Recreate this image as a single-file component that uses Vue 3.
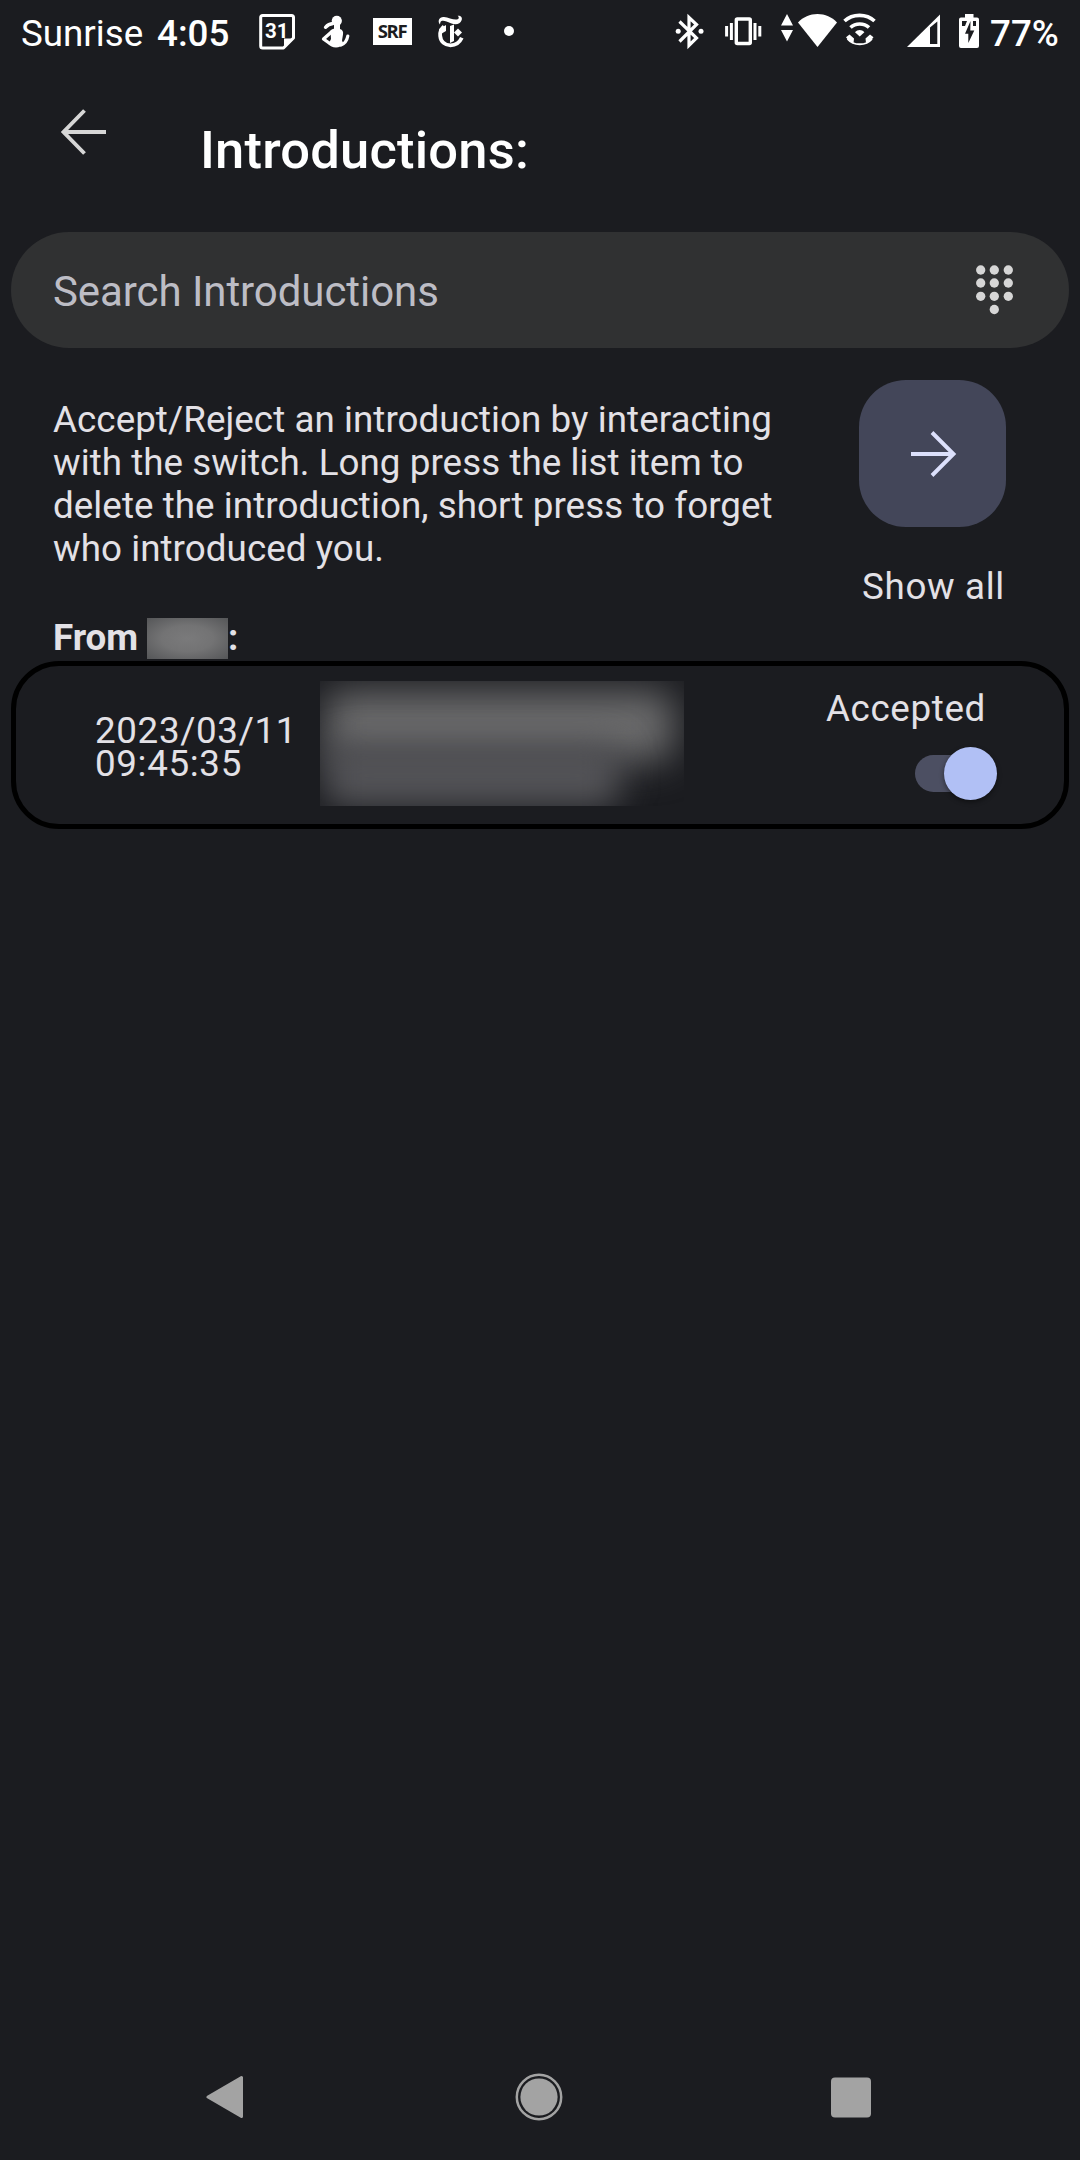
<script setup>
import { ref } from 'vue'

const accepted = ref(true)
const dialDots = [
  [4.7, 5], [18.3, 5], [32.3, 5],
  [4.7, 18], [18.3, 18], [32.3, 18],
  [4.7, 31.3], [18.3, 31.3], [32.3, 31.3],
  [18.3, 44.5],
]
</script>

<template>
  <div class="screen">
    <header class="status">
      <div class="side">
        <span class="label">Sunrise</span>
        <span class="label clock">4:05</span>
        <svg class="calendar" width="40" height="62" viewBox="257 0 40 62">
          <path d="M262.700 15.500h28.800a2 2 0 0 1 2 2v20.500l-10 10h-20.800a2 2 0 0 1-2-2v-28.500a2 2 0 0 1 2-2z" fill="none" stroke="#fff" stroke-width="3" stroke-linejoin="round" />
          <path d="M284 47v-8.500h9z" fill="#fff" />
          <text x="276.700" y="38.300" text-anchor="middle" class="day">31</text>
        </svg>
        <svg class="runner" width="30" height="62" viewBox="320 0 30 62">
          <circle cx="336.800" cy="20.800" r="5.100" fill="#fff" />
          <path d="M333 23.500c-3.500.3-5.500 1.500-7.500 3.800" fill="none" stroke="#fff" stroke-width="3.300" stroke-linecap="round" />
          <path d="M334 24h6v5c2.500.8 3.500 2.500 3 5.500l-1 6 1.500 3.500c-1.500 2.200-4.500 3.500-7.500 3.500-3.500 0-6-1.500-7.500-3.500l2.500-5-.5-8c.5-1.500 1.800-2 3.500-2.300z" fill="#fff" />
          <path d="M332 31.500l-8.500 7.500 7 5" fill="none" stroke="#fff" stroke-width="3.300" stroke-linejoin="round" />
          <path d="M341 45c4-1.500 6-4.500 6.800-9" fill="none" stroke="#fff" stroke-width="3.200" stroke-linecap="round" />
        </svg>
        <svg class="srf" width="39" height="62" viewBox="373 0 39 62">
          <path d="M373 18h39v27h-39z" fill="#fff" />
          <text x="392.700" y="38" text-anchor="middle" textLength="30" class="srf-text">SRF</text>
        </svg>
        <svg class="times" width="30" height="62" viewBox="436 0 30 62">
          <path d="M440 24.500c-3-3.500-.5-8 4-7.500 4.500.5 9.500 3.200 13 2.500 2-.4 2.500-2.300.6-3.800 3.500-.2 5 2 4 4.600-1.500 4.200-6 4.700-10.800 3-4-1.500-7-3.200-9.300-2.200-1.300.6-1.200 2-1.500 3.400z" fill="#fff" />
          <path d="M444 26.500c-3 2.500-4.200 6-3.800 9.500.6 6 5 9.300 10.300 9.300 5 0 9-2.500 11.300-7.500" fill="none" stroke="#fff" stroke-width="3.800" />
          <path d="M439 29l7-4v6l-6 3.500z" fill="#fff" />
          <path d="M450 26l4-1.500v16.500l-4 2z" fill="#fff" />
          <path d="M458 28.500l4 4-4 4-4-4z" fill="#fff" />
        </svg>
        <span class="more"></span>
      </div>

      <div class="side right">
        <svg width="29" height="62" viewBox="675 0 29 62">
          <path d="M679.500 21.500l17 16.500-7.500 7.500V17.500l7.500 7L679.500 41.500" fill="none" stroke="#fff" stroke-width="3.200" />
          <circle cx="678.200" cy="31.300" r="2.500" fill="#fff" />
          <circle cx="701" cy="31.300" r="2.500" fill="#fff" />
        </svg>
        <svg class="vibrate" width="37" height="62" viewBox="725 0 37 62">
          <rect x="736.300" y="19" width="14" height="24.500" rx="1" fill="none" stroke="#fff" stroke-width="3.400" />
          <path d="M731.400 23v17M755 23v17M726.600 26v10.500M759.800 26v10.500" stroke="#fff" stroke-width="3" />
        </svg>
        <svg class="traffic" width="12" height="62" viewBox="781 0 12 62">
          <path d="M787 14l6 11.500h-12zM787 41.500l6-11.500h-12z" fill="#fff" />
        </svg>
        <svg class="wifi" width="39" height="62" viewBox="798 0 39 62">
          <path d="M817.500 47L798 22.500C803 17 810 14 817.500 14s14.500 3 19.500 8.500z" fill="#fff" />
        </svg>
        <svg class="wifi-call" width="34" height="62" viewBox="843 0 34 62">
          <path d="M844.500 21c8-7.500 22-7.500 30 0M850.500 27.500c5-4.700 13.500-4.700 18.500 0" fill="none" stroke="#fff" stroke-width="3.600" />
          <path d="M859.700 36.500l-4.700-4.300c2.600-3 6.800-3 9.400 0z" fill="#fff" />
          <path d="M847.500 39c6 7 18.500 7 24.500 0" fill="none" stroke="#fff" stroke-width="1.800" />
          <path d="M849.500 34.500l4.500 4-.5 4.500c-3-1-6-3.500-7.500-5.800zM870 34.500l-4.500 4 .5 4.500c3-1 6-3.500 7.500-5.800z" fill="#fff" />
        </svg>
        <svg class="signal" width="33" height="62" viewBox="907 0 33 62">
          <path d="M907 47L940 14.500V47z" fill="#fff" />
          <path d="M930 27.500l7.300-6V44H930z" fill="#1b1c20" />
        </svg>
        <svg class="battery" width="20" height="62" viewBox="959 0 20 62">
          <path d="M965 14h8.500v3.500h3.500a2 2 0 0 1 2 2V46a2 2 0 0 1-2 2h-16a2 2 0 0 1-2-2V19.500a2 2 0 0 1 2-2h4z" fill="#fff" />
          <path d="M970.500 21l-5.500 12.800h3.300V43l6-12.500h-4z" fill="#1b1c20" />
          <path d="M962 21h5l-2 5h-3zM973 21h3v5h-3z" fill="#1b1c20" />
        </svg>
        <span class="label percent">77%</span>
      </div>
    </header>

    <div class="toolbar">
      <svg class="back" width="48" height="48" viewBox="0 0 48 48">
        <path d="M46 24H4M24.500 2.500L3.500 24 24.500 45.500" fill="none" stroke="#d6d6d6" stroke-width="3.900" />
      </svg>
      <h1>Introductions:</h1>
    </div>

    <div class="search">
      <span>Search Introductions</span>
      <svg width="37" height="50" viewBox="0 0 37 50">
        <circle v-for="([x, y], i) in dialDots" :key="i" :cx="x" :cy="y" r="4.650" fill="#d6d6d6" />
      </svg>
    </div>

    <div class="intro">
      <div class="explain">
        <p>Accept/Reject an introduction by interacting<br />with the switch. Long press the list item to<br />delete the introduction, short press to forget<br />who introduced you.</p>
        <div class="from"><b>From</b><i class="name-mask"></i><b>:</b></div>
      </div>
      <div class="show-all">
        <button type="button">
          <svg width="48" height="48" viewBox="0 0 48 48">
            <path d="M2 24h42M23 2.500L44.500 24 23 45.500" fill="none" stroke="#dce0fc" stroke-width="3.900" />
          </svg>
        </button>
        <span>Show all</span>
      </div>
    </div>

    <div class="item">
      <div class="date">2023/03/11<br />09:45:35</div>
      <div class="contact-mask"><i class="first"></i><i class="second"></i></div>
      <div class="state">
        <span>Accepted</span>
        <div class="switch" :class="{ on: accepted }" @click="accepted = !accepted"><i></i></div>
      </div>
    </div>

    <nav>
      <svg width="38" height="48" viewBox="0 0 38 48">
        <path d="M2 24L35.500 4.500v39z" fill="#a3a3a3" stroke="#a3a3a3" stroke-width="3" stroke-linejoin="round" />
      </svg>
      <svg class="home" width="48" height="48" viewBox="0 0 48 48">
        <circle cx="24" cy="24" r="22.200" fill="none" stroke="#a3a3a3" stroke-width="2.500" />
        <circle cx="24" cy="24" r="18.600" fill="#a3a3a3" />
      </svg>
      <svg width="40" height="48" viewBox="0 0 40 48">
        <rect y="4.500" width="40" height="40" rx="4" fill="#a3a3a3" />
      </svg>
    </nav>
  </div>
</template>

<style>
body {
  margin: 0;
  background: #1b1c20;
}
</style>

<style scoped>
.screen {
  width: 1080px;
  height: 2160px;
  display: flex;
  flex-direction: column;
  overflow: hidden;
  background: #1b1c20;
  color: #e3e1e6;
  font-family: Roboto, "Liberation Sans", sans-serif;
  font-size: 36.75px;
  letter-spacing: 0.656px;
  white-space: nowrap;
}
svg {
  display: block;
  flex: none;
}
.status {
  height: 67px;
  display: flex;
  justify-content: space-between;
  padding: 0 21px 0 21px;
  color: #fff;
  letter-spacing: 0;
}
.side {
  display: flex;
  align-items: flex-start;
}
.label {
  line-height: 67px;
}
.side > .label:first-child {
  width: 136px;
}
.clock {
  width: 100px;
  font-weight: 500;
}
.percent {
  width: 69px;
  margin-left: 11px;
  font-weight: 500;
}
.day {
  font: 700 20.5px Roboto, sans-serif;
  fill: #fff;
}
.srf-text {
  font: 700 18.5px "Open Sans", sans-serif;
  fill: #1b1c20;
}
.runner { margin-left: 23px; }
.srf { margin-left: 23px; }
.times { margin-left: 24px; }
.more {
  width: 10px;
  height: 10px;
  margin: 26px 0 0 38px;
  border-radius: 50%;
  background: #fff;
}
.vibrate { margin-left: 21px; }
.traffic { margin-left: 19px; }
.wifi { margin-left: 5px; }
.wifi-call { margin-left: 6px; }
.signal { margin-left: 30px; }
.battery { margin-left: 19px; }
.toolbar {
  height: 165px;
  display: flex;
  align-items: flex-start;
}
.back {
  margin: 41px 0 0 60px;
}
h1 {
  margin: 48px 0 0 92px;
  font-size: 52.5px;
  font-weight: 500;
  line-height: 70px;
  letter-spacing: 0.200px;
  color: #fff;
}
.search {
  height: 116px;
  margin: 0 11px;
  padding: 0 56px 0 42px;
  box-sizing: border-box;
  display: flex;
  align-items: center;
  justify-content: space-between;
  border-radius: 58px;
  background: #303132;
  color: #bdbdc5;
  font-size: 42px;
  letter-spacing: -0.070px;
}
.search span {
  padding-top: 3px;
}
.intro {
  height: 313px;
  display: flex;
  justify-content: space-between;
  padding: 0 74px 0 53px;
}
.explain {
  padding-top: 50px;
}
p {
  margin: 0;
  line-height: 43px;
  letter-spacing: 0.060px;
}
.from {
  height: 43px;
  margin-top: 46px;
  display: flex;
  line-height: 43px;
  letter-spacing: 0;
}
.from b:first-child {
  width: 94px;
}
.name-mask {
  width: 81px;
  height: 41px;
  margin: 2px 0 0 0;
  background: radial-gradient(ellipse at 50% 50%, #7a7a7b 0%, #737374 45%, #555658 100%);
}
.show-all {
  width: 147px;
  display: flex;
  flex-direction: column;
  align-items: center;
}
.show-all button {
  width: 147px;
  height: 147px;
  margin: 32px 0 38px;
  padding: 0;
  display: grid;
  place-items: center;
  border: 0;
  border-radius: 47px;
  background: #434659;
}
.show-all span {
  margin-left: 2px;
  line-height: 44px;
}
.item {
  height: 168px;
  margin: 0 11px;
  box-sizing: border-box;
  display: flex;
  border: 5px solid #000;
  border-radius: 48px;
}
.date {
  width: 225px;
  padding: 48px 0 0 79px;
  line-height: 33px;
}
.contact-mask {
  position: relative;
  width: 364px;
  height: 125px;
  margin-top: 15px;
  overflow: hidden;
}
.contact-mask i {
  position: absolute;
  border-radius: 16px;
}
.first {
  left: 4px;
  top: 10px;
  width: 350px;
  height: 70px;
  background: #6c6c6d;
  filter: blur(19px);
}
.second {
  left: 4px;
  top: 62px;
  width: 296px;
  height: 65px;
  background: #535357;
  filter: blur(17px);
}
.state {
  flex: 1;
  display: flex;
  flex-direction: column;
  align-items: flex-end;
  padding: 20px 67px 0 0;
}
.state span {
  margin-right: 11px;
  line-height: 46px;
}
.switch {
  width: 82px;
  height: 37px;
  margin-top: 23px;
  display: flex;
  align-items: center;
  background: linear-gradient(#4c4f62, #4c4f62) left / 70px 37px no-repeat;
  border-radius: 19px;
}
.switch i {
  width: 53px;
  height: 53px;
  flex: none;
  border-radius: 50%;
  background: #b1c0f5;
  box-shadow: 0 2px 5px rgba(0, 0, 0, 0.45);
}
.switch.on {
  justify-content: flex-end;
}
nav {
  height: 127px;
  margin-top: auto;
  padding: 0 209px 0 206px;
  display: flex;
  align-items: center;
  justify-content: space-between;
}
.home {
  margin-left: 3px;
}
</style>
